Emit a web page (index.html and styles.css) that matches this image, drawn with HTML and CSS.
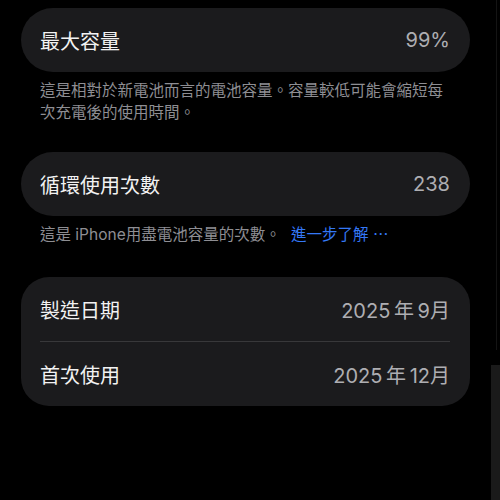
FILE: index.html
```html
<!DOCTYPE html>
<html lang="zh-Hant">
<head>
    <meta charset="UTF-8">
    <meta name="viewport" content="width=device-width, initial-scale=1.0">
    <title>電池健康度</title>
    <link rel="stylesheet" href="styles.css">
</head>
<body>
    <div class="page">
        <!-- 最大容量 -->
        <div class="card pill">
            <span class="label">最大容量</span>
            <span class="value">99%</span>
        </div>
        <p class="note">這是相對於新電池而言的電池容量。容量較低可能會縮短每次充電後的使用時間。</p>

        <!-- 循環次數 -->
        <div class="card pill second">
            <span class="label">循環使用次數</span>
            <span class="value">238</span>
        </div>
        <p class="note">這是 iPhone用盡電池容量的次數。 <a href="#" class="more">進一步了解 ⋯</a></p>

        <!-- 日期 -->
        <div class="card group">
            <div class="row">
                <span class="label">製造日期</span>
                <span class="value">2025&#8201;年&#8201;9月</span>
            </div>
            <div class="row">
                <span class="label">首次使用</span>
                <span class="value">2025&#8201;年&#8201;12月</span>
            </div>
        </div>
    </div>

    <!-- 右側捲軸殘影 -->
    <div class="edge-line"></div>
    <div class="edge-block"></div>
</body>
</html>
```

FILE: styles.css
```css
body {
    margin: 0;
    padding: 0;
    background-color: #000;
    font-family: Inter, "Noto Sans CJK TC", sans-serif;
    color: #f2f2f7;
    width: 500px;
    height: 500px;
    overflow: hidden;
}

.page {
    padding: 8px 30px 0 21px;
}

.card {
    background-color: #1b1b1d;
}

.pill {
    height: 64px;
    border-radius: 32px;
    display: flex;
    justify-content: space-between;
    align-items: center;
    padding: 0 20px 0 19px;
}

.pill.second {
    margin-top: 28px;
}

.label {
    font-size: 20px;
    color: #f2f2f2;
}

.value {
    font-size: 20px;
    color: #aeaeb2;
}

.note {
    margin: 8px 0 0 19px;
    width: 414px;
    font-size: 15.5px;
    line-height: 22px;
    color: #8e8e93;
}

.more {
    color: #3478f6;
    text-decoration: none;
    margin-left: 6px;
}

.group {
    margin-top: 31px;
    border-radius: 28px;
    padding: 0 20px 0 19px;
}

.row {
    height: 64px;
    display: flex;
    justify-content: space-between;
    align-items: center;
}

.row + .row {
    border-top: 1px solid #38383a;
}

.edge-line {
    position: absolute;
    top: 0;
    left: 496px;
    width: 1px;
    height: 350px;
    background-color: #141414;
}

.edge-block {
    position: absolute;
    top: 365px;
    left: 491px;
    width: 9px;
    height: 135px;
    background-color: #1a1a1a;
}
```
